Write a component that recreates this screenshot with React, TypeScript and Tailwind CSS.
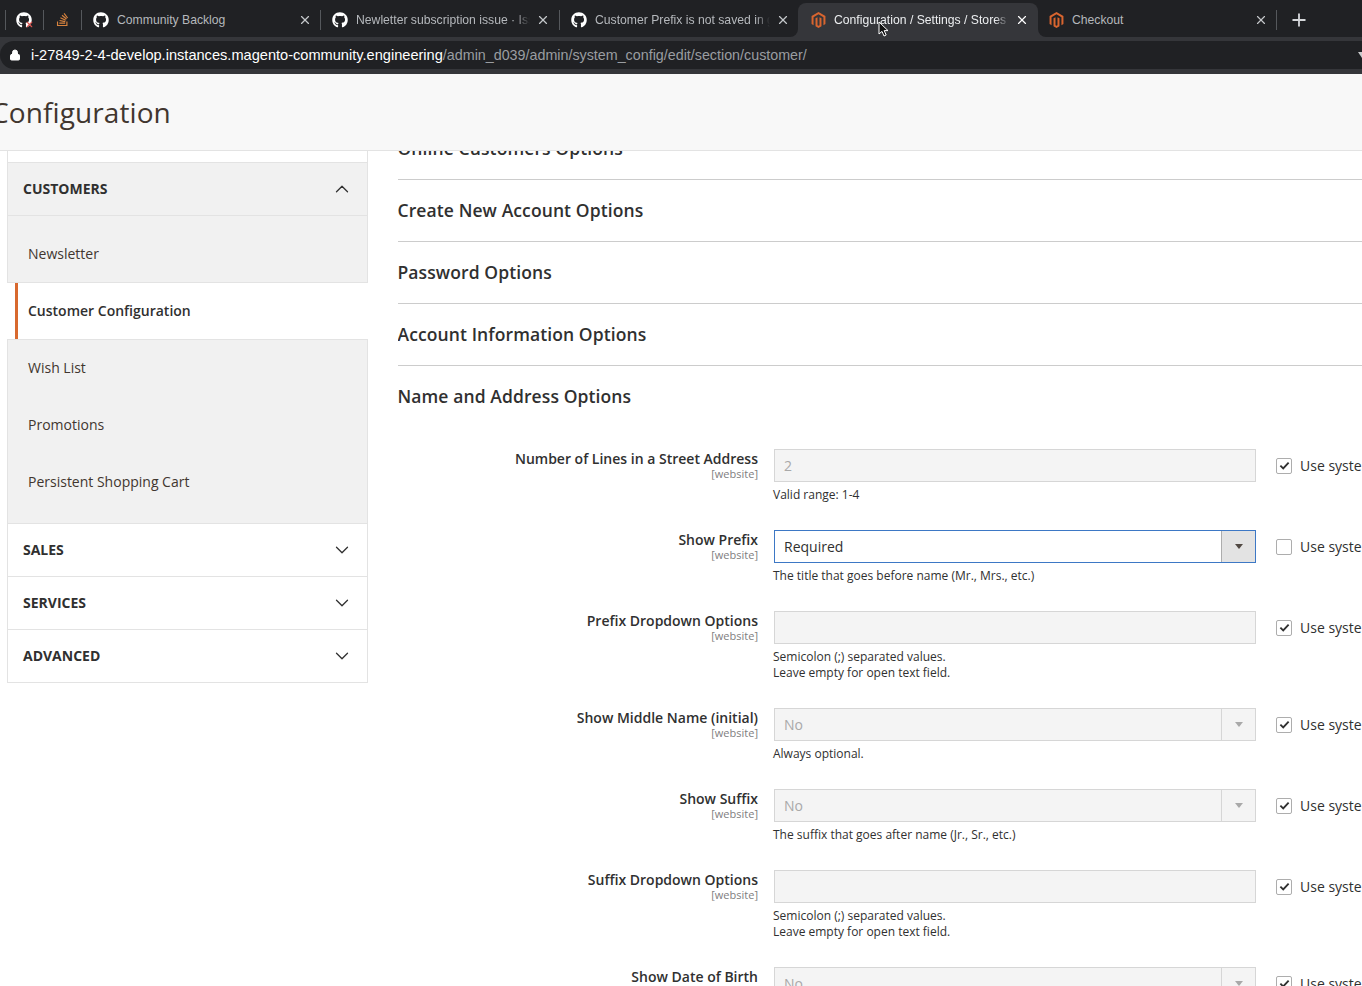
import { FaGithub, FaMagento, FaStackOverflow } from "react-icons/fa";
import { ChevronDown, ChevronUp, Lock, Plus, X } from "lucide-react";

const OPEN = "font-['Open_Sans',sans-serif]";

function Tab({ icon, title, width, active, fade, tight }: { icon: "gh" | "mg"; title: string; width: number; active?: boolean; fade?: boolean; tight?: boolean }) {
  return (
    <div
      style={{ width }}
      className={`relative flex shrink-0 items-center ${tight ? "pr-[8px]" : "pr-[9px]"} ${active ? "h-[34px] self-end rounded-t-[8px] bg-[#35363a] pb-px pl-[13px] text-[#eceef0]" : "h-[35px] pl-[11px] text-[#b5b8bc]"}`}
    >
      {active && (
        <>
          <div className="absolute -left-[8px] bottom-0 h-[8px] w-[8px] bg-[#35363a]">
            <div className="h-full w-full rounded-br-[8px] bg-[#202124]" />
          </div>
          <div className="absolute -right-[8px] bottom-0 h-[8px] w-[8px] bg-[#35363a]">
            <div className="h-full w-full rounded-bl-[8px] bg-[#202124]" />
          </div>
        </>
      )}
      {icon === "gh" ? <FaGithub className="h-[16px] w-[16px] shrink-0 text-white" /> : <FaMagento className="h-[16px] w-[15px] shrink-0 text-[#d9652f]" />}
      <span className={`ml-[8px] min-w-0 flex-1 overflow-hidden whitespace-nowrap pt-px text-[12.2px] ${fade ? "[mask-image:linear-gradient(to_right,black_92%,transparent)]" : ""}`}>{title}</span>
      <X className={`ml-[6px] h-[14px] w-[14px] shrink-0 ${active ? "text-white" : "text-[#c4c7ca]"}`} strokeWidth={2} />
    </div>
  );
}

function Sep() {
  return <div className="h-[20px] w-px shrink-0 bg-[#55585c]" />;
}

function Browser() {
  return (
    <div className="font-['Liberation_Sans',sans-serif]">
      <div className="flex h-[37px] items-center bg-[#202124] pt-[2px]">
        <div className="ml-[5px]"><Sep /></div>
        <div className="relative ml-[10px] h-[16px] w-[16px] shrink-0">
          <FaGithub className="h-[16px] w-[16px] text-white" />
          <X className="absolute -bottom-[1px] -right-[2px] h-[9px] w-[9px] text-[#d9534f]" strokeWidth={3} />
        </div>
        <div className="ml-[11px]"><Sep /></div>
        <FaStackOverflow className="ml-[11px] h-[15px] w-[15px] shrink-0 text-[#d8833e]" />
        <div className="ml-[11px]"><Sep /></div>
        <div className="flex h-full items-center">
          <Tab icon="gh" title="Community Backlog" width={238} tight />
          <Sep />
          <Tab icon="gh" title="Newletter subscription issue · Issues" width={238} fade />
          <Sep />
          <Tab icon="gh" title="Customer Prefix is not saved in guest" width={238} fade tight />
          <Tab icon="mg" title="Configuration / Settings / Stores / Magento" width={240} active fade />
          <Tab icon="mg" title="Checkout" width={238} tight />
          <Sep />
          <Plus className="ml-[12px] h-[20px] w-[20px] shrink-0 text-[#d5d7da]" strokeWidth={2.2} />
        </div>
      </div>
      <div className="bg-[#35363a] pb-[5px] pt-[4px]">
        <div className="flex h-[28px] items-center rounded-l-[14px] bg-[#202124]">
          <Lock className="ml-[9px] h-[12px] w-[12px] fill-white text-white" strokeWidth={2} />
          <span className="ml-[10px] whitespace-nowrap pt-px text-[14.6px] text-white">
            i-27849-2-4-develop.instances.magento-community.engineering
            <span className="text-[14.3px] text-[#9a9da1]">/admin_d039/admin/system_config/edit/section/customer/</span>
          </span>
        </div>
      </div>
    </div>
  );
}

function SideItem({ label, up }: { label: string; up?: boolean }) {
  return <div className={`flex h-[57px] items-center pl-[20px] text-[14px] text-[#41362f] ${up ? "pb-[2px]" : ""}`}>{label}</div>;
}

function SideHead({ label, open }: { label: string; open?: boolean }) {
  return (
    <div className={`flex h-[53px] items-center justify-between border-b border-[#e3e3e3] pb-[2px] pl-[15px] pr-[14px] text-[14px] font-bold text-[#303030] ${open ? "bg-[#f1f1f1]" : "bg-white"}`}>
      {label}
      {open ? <ChevronUp className="mt-[2px] h-[22px] w-[22px] text-[#303030]" strokeWidth={1.4} /> : <ChevronDown className="mt-[2px] h-[22px] w-[22px] text-[#303030]" strokeWidth={1.4} />}
    </div>
  );
}

function Sidebar() {
  return (
    <div className="ml-[7px] w-[361px] shrink-0 self-start border-x border-b border-[#e3e3e3]">
      <div className="h-[12px] border-b border-[#e3e3e3] bg-white" />
      <SideHead label="CUSTOMERS" open />
      <div className="border-b border-[#e3e3e3] bg-[#f1f1f1] pt-[10px]">
        <SideItem label="Newsletter" up />
        <div className="-mx-px -my-px border-y border-[#e3e3e3] bg-white">
          <div className="ml-[8px] flex h-[56px] items-center border-l-[3px] border-[#d8692f] pb-[2px] pl-[10px] text-[14px] font-semibold text-[#303030]">
            Customer Configuration
          </div>
        </div>
        <SideItem label="Wish List" />
        <SideItem label="Promotions" />
        <div className="pb-[13px]">
          <SideItem label="Persistent Shopping Cart" />
        </div>
      </div>
      <SideHead label="SALES" />
      <SideHead label="SERVICES" />
      <div className="-mb-px">
        <SideHead label="ADVANCED" />
      </div>
    </div>
  );
}

function Section({ title }: { title: string }) {
  return (
    <div className="flex h-[62px] items-center border-b border-[#cccccc] text-[17.5px] font-semibold tracking-[0.1px] text-[#303030]">
      <span className="-ml-[0.5px]">{title}</span>
    </div>
  );
}

function Row({ label, note, value, select, focus, unchecked }: { label: string; note?: string[]; value?: string; select?: boolean; focus?: boolean; unchecked?: boolean }) {
  return (
    <div className="flex pb-[27px]">
      <div className="w-[360px] shrink-0 text-right">
        <div className="h-[19px] text-[14px] font-semibold leading-[20px] text-[#303030]">{label}</div>
        <div className="text-[11px] leading-[11px] text-[#808080]">[website]</div>
      </div>
      <div className="ml-[16px] w-[482px] shrink-0">
        <div className={`flex h-[33px] items-center border text-[14px] ${focus ? "border-[#3d78c5] bg-white text-[#303030]" : "border-[#d6d6d6] bg-[#f4f4f4] text-[#a9a9a9]"}`}>
          <span className="flex-1 pl-[9px]">{value}</span>
          {select && (
            <div className={`flex h-full w-[34px] items-center justify-center border-l ${focus ? "border-[#adadad] bg-[#e3e3e3]" : "border-[#d6d6d6]"}`}>
              <div className={`h-0 w-0 border-x-[4px] border-t-[5px] border-x-transparent ${focus ? "border-t-[#514943]" : "border-t-[#a9a9a9]"}`} />
            </div>
          )}
        </div>
        {note && (
          <div className="-ml-px pt-[5px] text-[12px] leading-[16px] text-[#303030]">
            {note.map((n) => (
              <div key={n}>{n}</div>
            ))}
          </div>
        )}
      </div>
      <div className="ml-[20px] flex h-[33px] items-center whitespace-nowrap text-[14px] text-[#303030]">
        <div className="flex h-[16px] w-[16px] items-center justify-center rounded-[2px] border border-[#adadad] bg-white">
          {!unchecked && (
            <svg viewBox="0 0 12 12" className="h-[11px] w-[11px]" fill="none" stroke="#303030" strokeWidth="2">
              <path d="M1.5 6.2 4.6 9.2 10.5 2.8" />
            </svg>
          )}
        </div>
        <span className="ml-[8px]">Use system value</span>
      </div>
    </div>
  );
}

export default function App() {
  return (
    <div className={`relative h-[986px] w-[1362px] overflow-hidden bg-white ${OPEN}`}>
      <Browser />
      <div className="relative z-10 flex h-[77px] items-center overflow-hidden border-b border-[#e3e3e3] bg-[#f8f8f8]">
        <h1 className="-ml-[9px] text-[28px] font-normal leading-none tracking-[0.1px] text-[#41362f]">Configuration</h1>
      </div>
      <div className="flex">
        <Sidebar />
        <div className="ml-[30px] min-w-0 flex-1 overflow-hidden">
          <div className="-mt-[33px]">
            <Section title="Online Customers Options" />
            <Section title="Create New Account Options" />
            <Section title="Password Options" />
            <Section title="Account Information Options" />
            <div className="flex h-[62px] items-center pb-[2px] text-[17.5px] font-semibold tracking-[0.1px] text-[#303030]">
              <span className="-ml-[0.5px]">Name and Address Options</span>
            </div>
          </div>
          <div className="pt-[21px]">
            <Row label="Number of Lines in a Street Address" value="2" note={["Valid range: 1-4"]} />
            <Row label="Show Prefix" value="Required" select focus unchecked note={["The title that goes before name (Mr., Mrs., etc.)"]} />
            <Row label="Prefix Dropdown Options" note={["Semicolon (;) separated values.", "Leave empty for open text field."]} />
            <Row label="Show Middle Name (initial)" value="No" select note={["Always optional."]} />
            <Row label="Show Suffix" value="No" select note={["The suffix that goes after name (Jr., Sr., etc.)"]} />
            <Row label="Suffix Dropdown Options" note={["Semicolon (;) separated values.", "Leave empty for open text field."]} />
            <Row label="Show Date of Birth" value="No" select />
          </div>
        </div>
      </div>
      {/* mouse pointer in the recording */}
      <svg viewBox="0 0 12 17" className="absolute left-[878px] top-[21px] z-20 h-[17px] w-[12px]">
        <path d="M1 1v12l3-2.6 2 4.6 2.2-1-2-4.4H10z" fill="#111" stroke="#fff" strokeWidth="1" />
      </svg>
      {/* star at the far end of the address bar */}
      <svg viewBox="0 0 8 8" className="absolute left-[1358px] top-[51px] z-20 h-[8px] w-[8px]">
        <path d="M0 1h8L4 7z" fill="#c8cacc" />
      </svg>
    </div>
  );
}
